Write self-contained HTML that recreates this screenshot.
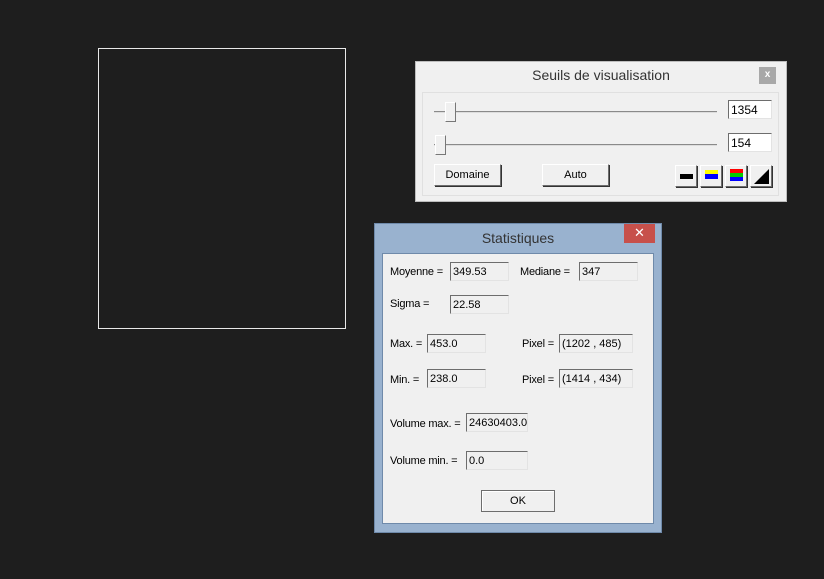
<!DOCTYPE html>
<html><head><meta charset="utf-8"><style>
*{margin:0;padding:0;box-sizing:border-box}
body{width:824px;height:579px;background:#1e1e1e;position:relative;overflow:hidden;font-family:"Liberation Sans",sans-serif;font-size:11px;color:#000}
.a{position:absolute}
.fld{position:absolute;background:#f0f0f0;border:1px solid #a0a0a0;border-top-color:#6d6d6d;border-left-color:#6d6d6d;border-right-color:#e3e3e3;border-bottom-color:#e3e3e3;padding:1px 0 0 2px;line-height:16px;font-size:11px}
.wf{background:#fff}
.btn{position:absolute;background:#f0f0f0;border:1px solid #fff;border-right-color:#6d6d6d;border-bottom-color:#6d6d6d;box-shadow:1px 1px 0 #333;text-align:center;font-size:11px}
.lbl{position:absolute;font-size:11px;letter-spacing:-0.2px}
</style></head><body>
<div class="a" style="left:98px;top:48px;width:248px;height:281px;border:1px solid #e8e8e8"></div>

<div class="a" style="left:415px;top:61px;width:372px;height:141px;background:#f0f0f0;border:1px solid #bdbdbd"></div>
<div class="a" style="left:415px;top:67px;width:372px;text-align:center;font-size:14px;color:#333">Seuils de visualisation</div>
<div class="a" style="left:759px;top:67px;width:17px;height:17px;background:#a8a8a8;color:#fff;font-size:10px;text-align:center;line-height:16px;font-weight:bold">x</div>
<div class="a" style="left:422px;top:92px;width:357px;height:104px;border:1px solid #e0e0e0"></div>
<div class="a" style="left:434px;top:111px;width:283px;height:2px;background:#8a8a8a;border-bottom:1px solid #ddd"></div>
<div class="a" style="left:445px;top:102px;width:11px;height:20px;background:#f0f0f0;border:1px solid #fff;border-right-color:#777;border-bottom-color:#777"></div>
<div class="a" style="left:434px;top:144px;width:283px;height:2px;background:#8a8a8a;border-bottom:1px solid #ddd"></div>
<div class="a" style="left:435px;top:135px;width:11px;height:20px;background:#f0f0f0;border:1px solid #fff;border-right-color:#777;border-bottom-color:#777"></div>
<div class="fld wf" style="left:728px;top:100px;width:44px;height:19px;font-size:12px;line-height:16px">1354</div>
<div class="fld wf" style="left:728px;top:133px;width:44px;height:19px;font-size:12px;line-height:16px">154</div>
<div class="btn" style="left:434px;top:164px;width:67px;height:22px;line-height:20px">Domaine</div>
<div class="btn" style="left:542px;top:164px;width:67px;height:22px;line-height:20px">Auto</div>
<div class="btn" style="left:675px;top:165px;width:22px;height:22px"><div class="a" style="left:4px;top:8px;width:13px;height:5px;background:#000"></div></div>
<div class="btn" style="left:700px;top:165px;width:22px;height:22px"><div class="a" style="left:4px;top:4px;width:13px;height:4px;background:#ff0"></div><div class="a" style="left:4px;top:8px;width:13px;height:5px;background:#00f"></div></div>
<div class="btn" style="left:725px;top:165px;width:22px;height:22px"><div class="a" style="left:4px;top:3px;width:13px;height:4px;background:#f00"></div><div class="a" style="left:4px;top:7px;width:13px;height:4px;background:#0c0"></div><div class="a" style="left:4px;top:11px;width:13px;height:4px;background:#00f"></div></div>
<div class="btn" style="left:750px;top:165px;width:22px;height:22px"><svg class="a" style="left:3px;top:3px" width="15" height="15"><polygon points="15,0 15,15 0,15" fill="#000"/></svg></div>

<div class="a" style="left:374px;top:223px;width:288px;height:310px;background:#99b2cf;border:1px solid #6f8aaa"></div>
<div class="a" style="left:374px;top:230px;width:288px;text-align:center;font-size:14px;color:#333">Statistiques</div>
<div class="a" style="left:624px;top:224px;width:31px;height:19px;background:#c7504b;color:#fff;text-align:center;font-size:13px;line-height:18px">✕</div>
<div class="a" style="left:382px;top:253px;width:272px;height:271px;background:#f0f0f0;border:1px solid #6f8aaa"></div>

<div class="lbl" style="left:390px;top:266px">Moyenne =</div>
<div class="fld" style="left:450px;top:262px;width:59px;height:19px">349.53</div>
<div class="lbl" style="left:520px;top:266px">Mediane =</div>
<div class="fld" style="left:579px;top:262px;width:59px;height:19px">347</div>
<div class="lbl" style="left:390px;top:298px">Sigma =</div>
<div class="fld" style="left:450px;top:295px;width:59px;height:19px">22.58</div>
<div class="lbl" style="left:390px;top:338px">Max. =</div>
<div class="fld" style="left:427px;top:334px;width:59px;height:19px">453.0</div>
<div class="lbl" style="left:522px;top:338px">Pixel =</div>
<div class="fld" style="left:559px;top:334px;width:74px;height:19px">(1202 , 485)</div>
<div class="lbl" style="left:390px;top:374px">Min. =</div>
<div class="fld" style="left:427px;top:369px;width:59px;height:19px">238.0</div>
<div class="lbl" style="left:522px;top:374px">Pixel =</div>
<div class="fld" style="left:559px;top:369px;width:74px;height:19px">(1414 , 434)</div>
<div class="lbl" style="left:390px;top:418px">Volume max. =</div>
<div class="fld" style="left:466px;top:413px;width:62px;height:19px">24630403.0</div>
<div class="lbl" style="left:390px;top:455px">Volume min. =</div>
<div class="fld" style="left:466px;top:451px;width:62px;height:19px">0.0</div>
<div class="btn" style="left:481px;top:490px;width:74px;height:22px;line-height:20px;border:1px solid #6d6d6d;box-shadow:inset 1px 1px 0 #fff">OK</div>
</body></html>
